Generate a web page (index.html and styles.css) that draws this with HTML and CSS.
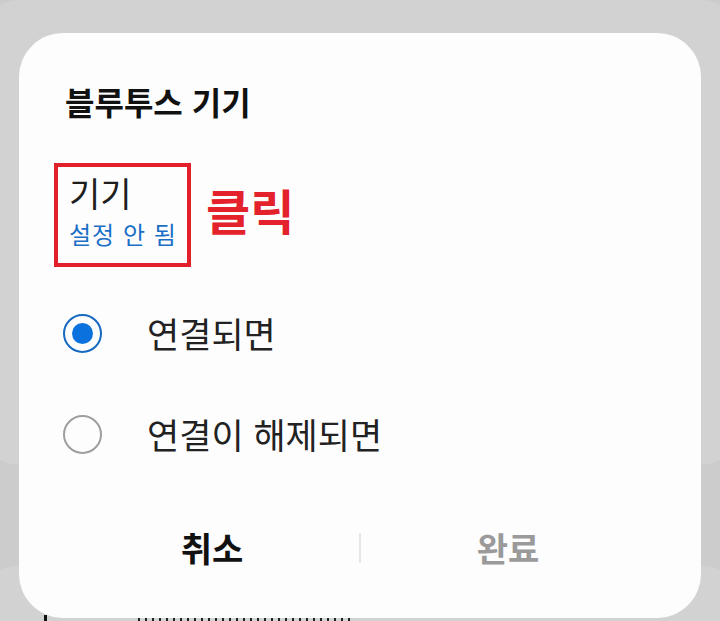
FILE: index.html
```html
<!DOCTYPE html>
<html lang="ko">
<head>
<meta charset="utf-8">
<title>블루투스 기기</title>
<link rel="stylesheet" href="styles.css">
</head>
<body>
<div class="backdrop">
  <div class="bg-card bg-card-top"></div>
  <div class="bg-card bg-card-bottom">
    <div class="bg-row"><span class="bg-icon"></span><span class="bg-strokes"></span></div>
  </div>
</div>
<div class="dialog">
  <div class="title">블루투스 기기</div>
  <div class="device-row">
    <div class="device-box">
      <div class="device-name">기기</div>
      <div class="device-sub">설정 안 됨</div>
    </div>
    <div class="click-label">클릭</div>
  </div>
  <div class="options">
    <div class="option">
      <span class="radio checked"></span>
      <span class="option-text">연결되면</span>
    </div>
    <div class="option">
      <span class="radio"></span>
      <span class="option-text">연결이 해제되면</span>
    </div>
  </div>
  <div class="actions">
    <div class="btn btn-cancel">취소</div>
    <div class="divider"></div>
    <div class="btn btn-done">완료</div>
  </div>
</div>
</body>
</html>
```
FILE: styles.css
```css
html, body {
  margin: 0;
  padding: 0;
}
body {
  width: 720px;
  height: 621px;
  overflow: hidden;
  background: #cccccc;
  font-family: "Noto Sans CJK KR", "Noto Sans", sans-serif;
  position: relative;
}
.backdrop {
  display: flex;
  flex-direction: column;
  height: 621px;
  overflow: hidden;
}
.bg-card {
  background: #d2d2d2;
  border-radius: 40px;
  margin: 0 -20px;
}
.bg-card-top {
  height: 465px;
  flex: none;
}
.bg-card-bottom {
  flex: 1;
  margin-top: 100px;
  border-radius: 40px 40px 0 0;
  padding: 50px 0 0 64px;
  box-sizing: border-box;
}
.bg-row {
  display: flex;
  align-items: flex-start;
  gap: 80px;
}
.bg-icon {
  width: 14px;
  height: 6px;
  border-left: 3px solid #111;
  box-sizing: border-box;
}
.bg-strokes {
  width: 215px;
  height: 6px;
  background: repeating-linear-gradient(90deg, #222 0 2px, transparent 2px 7px);
}
.dialog {
  position: absolute;
  left: 19px;
  top: 33px;
  width: 682px;
  height: 585px;
  background: #fdfdfd;
  border-radius: 44px;
  box-sizing: border-box;
  padding: 52px 0 0 0;
  display: flex;
  flex-direction: column;
}
.title {
  font-size: 32px;
  font-weight: 700;
  line-height: 32px;
  color: #111;
  margin-left: 46px;
}
.device-row {
  display: flex;
  align-items: flex-start;
  margin-top: 46px;
  margin-left: 35px;
}
.device-box {
  width: 137px;
  height: 104px;
  box-sizing: border-box;
  border: 4px solid #e2202b;
  padding: 8px 0 0 11px;
}
.device-name {
  font-size: 34px;
  line-height: 36px;
  color: #1e1e1e;
}
.device-sub {
  font-size: 24px;
  line-height: 26px;
  margin-top: 10px;
  color: #1a6fc6;
  letter-spacing: 1px;
}
.click-label {
  font-size: 48px;
  font-weight: 700;
  line-height: 48px;
  color: #e3222c;
  margin-left: 15px;
  margin-top: 22px;
}
.options {
  display: flex;
  flex-direction: column;
  gap: 61px;
  margin-top: 46px;
  margin-left: 44px;
}
.option {
  display: flex;
  align-items: center;
  height: 40px;
}
.radio {
  width: 39px;
  height: 39px;
  box-sizing: border-box;
  border-radius: 50%;
  border: 2px solid #9e9e9e;
  display: flex;
  align-items: center;
  justify-content: center;
}
.radio.checked {
  border-color: #1569c2;
}
.radio.checked::after {
  content: "";
  width: 21px;
  height: 21px;
  border-radius: 50%;
  background: #0b72dd;
}
.option-text {
  font-size: 35px;
  line-height: 40px;
  color: #222;
  margin-left: 45px;
}
.actions {
  display: flex;
  align-items: center;
  margin-top: auto;
  margin-bottom: 50px;
  height: 40px;
}
.btn {
  flex: 1;
  text-align: center;
  font-size: 34px;
  font-weight: 700;
  line-height: 40px;
}
.btn-cancel {
  color: #111;
  padding-left: 46px;
}
.btn-done {
  color: #9a9a9a;
  padding-right: 46px;
}
.divider {
  width: 2px;
  height: 30px;
  background: #e6e6e6;
}
```
